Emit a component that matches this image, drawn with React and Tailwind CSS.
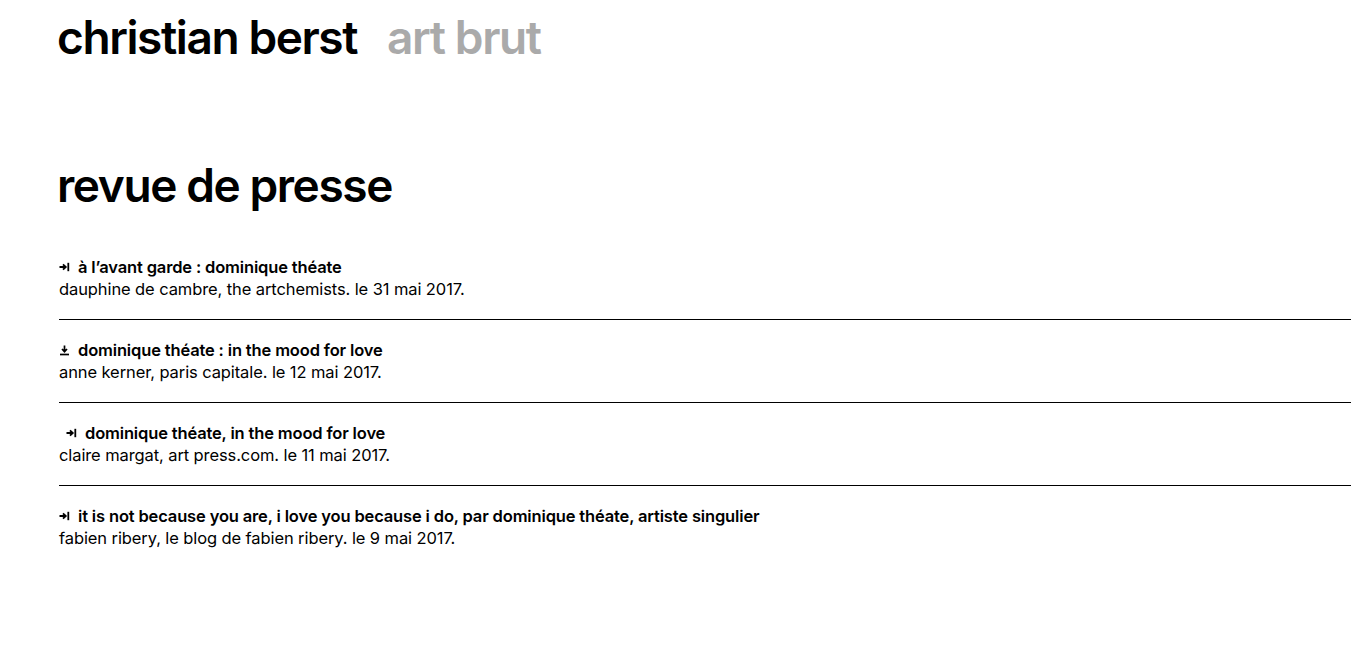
import React from 'react';

const items = [
  {
    icon: 'link',
    title: 'à l’avant garde : dominique théate',
    source: 'dauphine de cambre, the artchemists. le 31 mai 2017.',
  },
  {
    icon: 'download',
    title: 'dominique théate : in the mood for love',
    source: 'anne kerner, paris capitale. le 12 mai 2017.',
  },
  {
    icon: 'link',
    indent: true,
    title: 'dominique théate, in the mood for love',
    source: 'claire margat, art press.com. le 11 mai 2017.',
  },
  {
    icon: 'link',
    title: 'it is not because you are, i love you because i do, par dominique théate, artiste singulier',
    source: 'fabien ribery, le blog de fabien ribery. le 9 mai 2017.',
  },
];

const LinkIcon = () => (
  <svg width="11" height="10" viewBox="0 0 11 10" className="shrink-0">
    <path d="M0.5 5h6M4 2.3l2.8 2.7L4 7.7" stroke="#000" strokeWidth="1.8" fill="none" />
    <path d="M9.3 0.8v8.4" stroke="#000" strokeWidth="1.8" />
  </svg>
);

const DownloadIcon = () => (
  <svg width="11" height="11" viewBox="0 0 11 11" className="shrink-0">
    <path d="M5.5 0.5v6M3 4l2.5 2.7L8 4" stroke="#000" strokeWidth="1.7" fill="none" />
    <path d="M1 9.5h9" stroke="#000" strokeWidth="1.7" />
  </svg>
);

const PressItem = ({ item, last }) => (
  <div className={`pt-[19px] ${last ? '' : 'border-b border-black pb-[19px]'}`}>
    <div className={`flex items-center gap-[8px] text-[16.5px] font-semibold leading-[22px] tracking-[-0.15px] ${item.indent ? 'pl-[7px]' : ''}`}>
      {item.icon === 'link' ? <LinkIcon /> : <DownloadIcon />}
      <span>{item.title}</span>
    </div>
    <p className="text-[16.5px] leading-[22px] tracking-[-0.1px]">{item.source}</p>
  </div>
);

export default function App() {
  return (
    <div className="min-h-screen bg-white text-black font-['Inter',sans-serif]">
      <header className="pl-[57px] pt-[9px] flex items-baseline gap-[30px] text-[46px] font-semibold leading-[56px] tracking-[-1.4px]">
        <span>christian berst</span>
        <span className="text-[#aaaaaa]">art brut</span>
      </header>
      <h1 className="pl-[57px] mt-[92px] text-[46px] font-semibold leading-[56px] tracking-[-1.4px]">revue de presse</h1>
      <section className="ml-[59px] mt-[24px]">
        {items.map((item, i) => (
          <PressItem key={i} item={item} last={i === items.length - 1} />
        ))}
      </section>
    </div>
  );
}
